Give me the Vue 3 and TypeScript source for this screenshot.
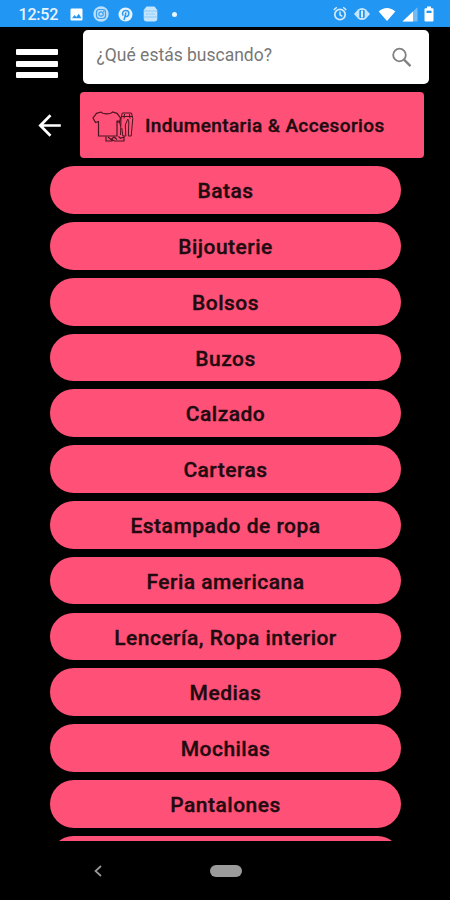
<script setup lang="ts">
const categories: string[] = [
  'Batas',
  'Bijouterie',
  'Bolsos',
  'Buzos',
  'Calzado',
  'Carteras',
  'Estampado de ropa',
  'Feria americana',
  'Lencería, Ropa interior',
  'Medias',
  'Mochilas',
  'Pantalones',
]
</script>

<template>
  <div class="screen">
    <header class="status">
      <span class="clock">12:52</span>
      <div class="notices">
        <svg width="13" height="13" viewBox="0 0 13 13">
          <rect x=".5" y=".5" width="12" height="12" rx="1.2" fill="#fff" />
          <path d="M2 10.2 4.5 7l1.8 2 2.5-3.3 2.6 4.5z" fill="#2196f3" />
        </svg>
        <svg width="16" height="16" viewBox="0 0 16 16">
          <circle cx="8" cy="8" r="7.7" fill="#b9dffb" />
          <rect x="3.5" y="3.5" width="9" height="9" rx="2.7" fill="none" stroke="#3d9fee" stroke-width="1.2" />
          <circle cx="8" cy="8" r="2.2" fill="none" stroke="#3d9fee" stroke-width="1.2" />
          <circle cx="10.8" cy="5.2" r=".7" fill="#3d9fee" />
        </svg>
        <svg width="15" height="15" viewBox="0 0 15 15">
          <circle cx="7.5" cy="7.5" r="7" fill="#e4f3fe" />
          <path d="M6 13 8 5.5M5.2 8.7C3.6 6.3 5 3.6 7.8 3.6c4.3 0 3.6 5.8.7 5.8-.8 0-1.3-.3-1.5-.8" fill="none" stroke="#2d99ef" stroke-width="1.5" />
        </svg>
        <svg width="15" height="16" viewBox="0 0 15 16">
          <path d="M3.5 .5h8L14.3 4v8.5a3 3 0 0 1-3 3H3.7a3 3 0 0 1-3-3V4z" fill="#c3e5fd" />
          <path d="M1 5h13M1 11h13" stroke="#8cc9f8" stroke-width="1" />
          <path d="M3 8h9" stroke="#a0d2fa" stroke-width="1.5" stroke-dasharray="2 .6" />
        </svg>
        <span class="dot"></span>
      </div>
      <div class="system">
        <svg width="14" height="16" viewBox="0 0 14 16">
          <circle cx="7" cy="8.5" r="5.2" fill="none" stroke="#d3ebfe" stroke-width="1.7" />
          <path d="M.7 4 3.8 1.3M13.3 4l-3.1-2.7M7 5.5v3.3l2.3 1.5" fill="none" stroke="#d3ebfe" stroke-width="1.5" />
        </svg>
        <svg width="18" height="14" viewBox="0 0 18 14">
          <path d="M1 7 5 2.5A6 6 0 0 1 13 2.5L17 7l-4 4.5a6 6 0 0 1-8 0z" fill="#c5e5fd" />
          <rect x="6.3" y="3" width="5.4" height="8" rx="1" fill="#2196f3" />
          <rect x="8" y="3.5" width="2" height="7" fill="#d5edff" />
        </svg>
        <svg width="18" height="15" viewBox="0 0 18 15">
          <path d="M.7 4.6C5.5-.3 12.5-.3 17.3 4.6L9 14z" fill="#fff" />
        </svg>
        <svg width="16" height="15" viewBox="0 0 16 15">
          <path d="M.5 14.5 15.5.3v14.2z" fill="#74bbf6" />
          <path d="M.5 14.5 11 4.5v10z" fill="#fff" />
        </svg>
        <svg width="10" height="16" viewBox="0 0 10 16">
          <path d="M3 .5h4v1.7h1.5q1 0 1 1v11.3q0 1-1 1h-7q-1 0-1-1V3.2q0-1 1-1H3z" fill="#fff" />
          <rect x="2.5" y="4.7" width="5" height="2.3" fill="#2196f3" />
        </svg>
      </div>
    </header>

    <div class="searchrow">
      <button class="menu" aria-label="Menú"><i></i><i></i><i></i></button>
      <div class="search">
        <span>¿Qué estás buscando?</span>
        <svg width="21" height="21" viewBox="0 0 21 21" fill="none" stroke="#808080">
          <circle cx="8.5" cy="8" r="6.3" stroke-width="1.8" />
          <path d="m13 12.6 6.5 6.5" stroke-width="2.3" />
        </svg>
      </div>
    </div>

    <div class="titlerow">
      <svg class="back" width="24" height="24" viewBox="0 0 24 24" fill="none" stroke="#fff" stroke-width="2.7">
        <path d="M22.8 12.5H2.5M12.5 2.3 2.3 12.5l10.2 10.2" />
      </svg>
      <div class="title">
        <svg width="44" height="34" viewBox="0 0 44 34" fill="none" stroke="#4a1522" stroke-width="1.2">
          <path d="M9 3 4.5 4.3 1 9l2.5 4.5 3-1V27H25V12.500l2.500 1 1-4.500L25 4.300 20.500 3c-2 2.500-9.500 2.500-11.500 0z" />
          <path d="M25 12h2.5l1 5M28.5 26l.5-16 1.200-6H39.500l1.300 5.500-1.600 17.500h-2.800l.4-14-1-3-2.500 6 .5 11h-3l-1-8M29.500 7.500h11M32.500 5l-.5 4.500M37.500 5l.5 4.500" stroke-width="1" />
          <path d="M14 27.5V32h6v-1.500l2.500 1.500H32v-4l-3.500 1.200L26.500 27.500M16 28l3 2.500 3-2.500 3 2.500" />
        </svg>
        <span>Indumentaria &amp; Accesorios</span>
      </div>
    </div>

    <main class="list">
      <div v-for="name in categories" :key="name" class="pill">{{ name }}</div>
      <div class="pill"></div>
    </main>

    <nav class="nav">
      <svg width="10" height="14" viewBox="0 0 10 14" fill="none" stroke="#999" stroke-width="1.7">
        <path d="M8 2 2.5 7 8 12" />
      </svg>
      <span class="home"></span>
    </nav>
  </div>
</template>

<style>
body {
  background: #000;
}
</style>

<style scoped>
.screen {
  box-sizing: border-box;
  width: 450px;
  height: 900px;
  display: flex;
  flex-direction: column;
  overflow: hidden;
  background: #000;
  font-family: Roboto, sans-serif;
}
svg {
  display: block;
  flex: none;
}
.status {
  flex: none;
  height: 27px;
  box-sizing: border-box;
  padding: 1px 16px 0 18.5px;
  display: flex;
  align-items: center;
  background: #2196f3;
}
.clock {
  width: 51.5px;
  color: #e9f5ff;
  font-size: 16px;
  font-weight: 500;
  letter-spacing: -0.2px;
}
.notices {
  display: flex;
  align-items: center;
  gap: 9.5px;
}
.dot {
  width: 5px;
  height: 5px;
  margin-left: 4.5px;
  border-radius: 50%;
  background: #e9f5ff;
}
.system {
  display: flex;
  align-items: center;
  gap: 6.2px;
  margin-left: auto;
}
.searchrow {
  flex: none;
  display: flex;
  height: 57px;
  padding: 3px 21px 0 15.5px;
  box-sizing: border-box;
}
.menu {
  width: 42px;
  height: 29px;
  margin: 19px 25.5px 0 0;
  padding: 0;
  border: 0;
  background: none;
  display: flex;
  flex-direction: column;
  justify-content: space-between;
}
.menu i {
  height: 6px;
  border-radius: 1px;
  background: #fff;
}
.search {
  flex: 1;
  display: flex;
  justify-content: space-between;
  box-sizing: border-box;
  height: 54px;
  padding: 15px 17px 0 13.5px;
  border-radius: 5px;
  background: #fff;
  color: #777;
  font-size: 17.5px;
  line-height: 21px;
}
.search svg {
  margin-top: 2px;
}
.titlerow {
  flex: none;
  display: flex;
  align-items: center;
  height: 66px;
  margin-top: 8px;
  padding: 0 26px 0 38px;
}
.title {
  display: flex;
  align-items: center;
  flex: 1;
  height: 66px;
  margin-left: 17.5px;
  box-sizing: border-box;
  padding-left: 12px;
  border-radius: 4px;
  background: #ff5177;
  color: #210b10;
  font-size: 19px;
  font-weight: 500;
  letter-spacing: 0.39px;
  -webkit-text-stroke: 0.35px #210b10;
  white-space: nowrap;
}
.title svg {
  margin-top: 2px;
}
.title span {
  margin-left: 9.5px;
}
.list {
  flex: none;
  height: 682.5px;
  overflow: hidden;
  box-sizing: border-box;
  padding: 8.3px 49px 0 50px;
  display: flex;
  flex-direction: column;
  gap: 8.1px;
}
.pill {
  flex: none;
  height: 47.7px;
  border-radius: 24px;
  background: #ff5177;
  color: #210b10;
  font-size: 21px;
  font-weight: 500;
  letter-spacing: 0.48px;
  -webkit-text-stroke: 0.35px #210b10;
  line-height: 51px;
  text-align: center;
}
.nav {
  flex: 1;
  display: flex;
  align-items: center;
  padding: 2px 0 0 93px;
}
.home {
  width: 32px;
  height: 12px;
  margin-left: 107px;
  border-radius: 6px;
  background: #9b9b9b;
}
</style>
